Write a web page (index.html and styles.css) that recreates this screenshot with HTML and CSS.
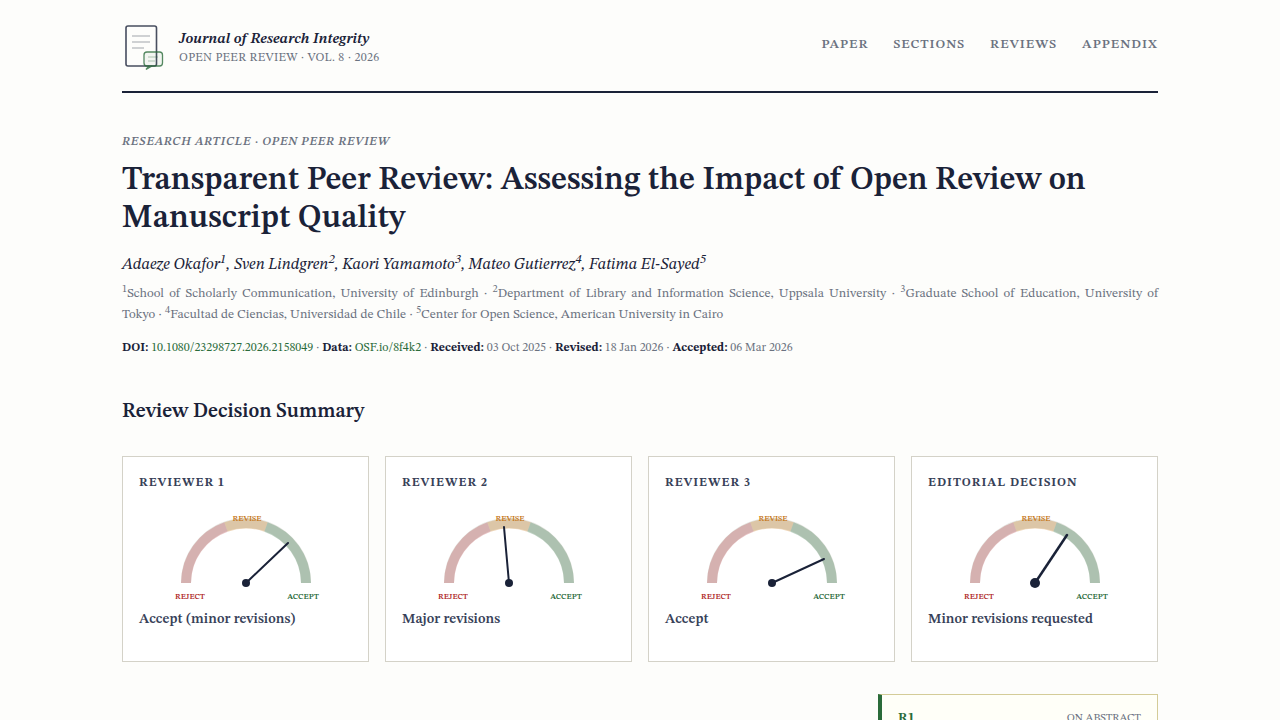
FILE: index.html
```html
<!DOCTYPE html>
<html lang="en">
<head>
<meta charset="utf-8">
<meta name="viewport" content="width=device-width, initial-scale=1">
<title>Journal of Research Integrity</title>
<link rel="stylesheet" href="styles.css">
</head>
<body>
<svg width="0" height="0" class="defs" aria-hidden="true">
  <defs>
    <g id="dial">
      <path class="track" d="M20 80A60 60 0 0 1 140 80"/>
      <path class="arc arc-reject" d="M20 80A60 60 0 0 1 60 24"/>
      <path class="arc arc-revise" d="M60 24A60 60 0 0 1 100 24"/>
      <path class="arc arc-accept" d="M100 24A60 60 0 0 1 140 80"/>
    </g>
  </defs>
</svg>
<div class="page">
  <header class="masthead">
    <div class="brand">
      <svg class="logo" width="45" height="50" viewBox="0 0 45 50" fill="none" aria-hidden="true">
        <rect x="4" y="4" width="30.500" height="40" rx="2" stroke="#1a2238" stroke-width="1.600" opacity=".8"/>
        <path d="M10 14h18M10 20h18M10 26h12" stroke="#1a2238" stroke-width="2" opacity=".2"/>
        <g stroke="#2a6b3a" stroke-width="1.300" opacity=".8"><rect x="22" y="30" width="18.500" height="14" rx="3" fill="#2a6b3a" fill-opacity=".06"/><path d="M27 44l-3 3.500 6-3.500"/></g>
        <path d="M26 35h10M26 39h7" stroke="#2a6b3a" opacity=".35"/>
      </svg>
      <div>
        <p class="brand-name">Journal of Research Integrity</p>
        <p class="brand-sub">Open Peer Review · Vol. 8 · 2026</p>
      </div>
    </div>
    <nav class="nav" aria-label="Main">
      <a href="#paper">Paper</a>
      <a href="#sections">Sections</a>
      <a href="#reviews">Reviews</a>
      <a href="#appendix">Appendix</a>
    </nav>
  </header>

  <main>
    <section class="article-head" id="paper">
      <p class="kicker">Research Article · Open Peer Review</p>
      <h1>Transparent Peer Review: Assessing the Impact of Open Review on Manuscript Quality</h1>
      <p class="authors">Adaeze Okafor<sup>1</sup>, Sven Lindgren<sup>2</sup>, Kaori Yamamoto<sup>3</sup>, Mateo Gutierrez<sup>4</sup>, Fatima El-Sayed<sup>5</sup></p>
      <p class="affiliations"><sup>1</sup>School of Scholarly Communication, University of Edinburgh · <sup>2</sup>Department of Library and Information Science, Uppsala University · <sup>3</sup>Graduate School of Education, University of <span class="keep">Tokyo · <sup>4</sup>Facultad</span> de Ciencias, Universidad de Chile · <sup>5</sup>Center for Open Science, American University in Cairo</p>
      <p class="meta"><strong>DOI:</strong> <a href="#doi">10.1080/23298727.2026.2158049</a> · <strong>Data:</strong> <a href="#data">OSF.io/8f4k2</a> · <strong>Received:</strong> 03 Oct 2025 · <strong>Revised:</strong> 18 Jan 2026 · <strong>Accepted:</strong> 06 Mar 2026</p>
    </section>

    <section id="reviews">
      <h2>Review Decision Summary</h2>
      <div class="decisions">
        <article class="card">
          <h3>Reviewer 1</h3>
          <svg class="gauge" viewBox="0 0 160 100" width="160" height="100">
            <use href="#dial"/>
            <text class="label reject" x="24" y="96">REJECT</text><text class="label revise" x="81" y="18">REVISE</text><text class="label accept" x="137" y="96">ACCEPT</text>
            <path class="needle" d="M80 80L122 40"/><circle class="hub" cx="80" cy="80" r="4"/>
          </svg>
          <p class="verdict">Accept (minor revisions)</p>
        </article>
        <article class="card">
          <h3>Reviewer 2</h3>
          <svg class="gauge" viewBox="0 0 160 100" width="160" height="100">
            <use href="#dial"/>
            <text class="label reject" x="24" y="96">REJECT</text><text class="label revise" x="81" y="18">REVISE</text><text class="label accept" x="137" y="96">ACCEPT</text>
            <path class="needle" d="M80 80L75 24"/><circle class="hub" cx="80" cy="80" r="4"/>
          </svg>
          <p class="verdict">Major revisions</p>
        </article>
        <article class="card">
          <h3>Reviewer 3</h3>
          <svg class="gauge" viewBox="0 0 160 100" width="160" height="100">
            <use href="#dial"/>
            <text class="label reject" x="24" y="96">REJECT</text><text class="label revise" x="81" y="18">REVISE</text><text class="label accept" x="137" y="96">ACCEPT</text>
            <path class="needle" d="M80 80L132 56"/><circle class="hub" cx="80" cy="80" r="4"/>
          </svg>
          <p class="verdict">Accept</p>
        </article>
        <article class="card">
          <h3>Editorial Decision</h3>
          <svg class="gauge" viewBox="0 0 160 100" width="160" height="100">
            <use href="#dial"/>
            <text class="label reject" x="24" y="96">REJECT</text><text class="label revise" x="81" y="18">REVISE</text><text class="label accept" x="137" y="96">ACCEPT</text>
            <path class="needle needle-final" d="M80 80L112 32"/><circle class="hub" cx="80" cy="80" r="5"/>
          </svg>
          <p class="verdict">Minor revisions requested</p>
        </article>
      </div>
    </section>

    <section class="body-grid" id="sections">
      <div></div>
      <aside class="comment">
        <span class="comment-id">R1</span>
        <span class="comment-on">On Abstract</span>
      </aside>
    </section>
  </main>
</div>
</body>
</html>
```
FILE: styles.css
```css
* { box-sizing: border-box; margin: 0; padding: 0; }

body {
  background: #fdfdfb;
  color: #1a2238;
  font-family: "STIX Two Text", "Liberation Serif", serif;
  font-size: 16px;
  overflow: hidden;
  height: 100vh;
}

a { color: inherit; text-decoration: none; }
sup { font-size: 80%; line-height: 0; }
.defs { position: absolute; }

.page { max-width: 1100px; margin: 0 auto; padding: 20px 32px 0; }

.masthead {
  display: flex;
  align-items: flex-start;
  justify-content: space-between;
  padding-bottom: 19px;
  border-bottom: 2px solid #1a2238;
}
.brand { display: flex; align-items: center; gap: 12px; }
.logo { display: block; margin-top: 2px; }
.brand-name { font-size: 15px; line-height: 20px; font-weight: 600; font-style: italic; padding-top: 4px; }
.brand-sub { font-size: 12px; line-height: 16px; letter-spacing: 0.3px; text-transform: uppercase; color: #6b7280; }
.nav { display: flex; gap: 25px; padding-top: 15px; }
.nav a { font-size: 13px; line-height: 20px; font-weight: 600; letter-spacing: 1px; text-transform: uppercase; color: #6b7280; }

.article-head { padding-top: 39px; }
.kicker { font-size: 12px; line-height: 20px; font-style: italic; font-weight: 600; letter-spacing: 0.06em; text-transform: uppercase; color: #6b7280; }
h1 { font-size: 32px; line-height: 38px; font-weight: 600; margin-top: 10px; }
.authors { font-size: 16px; line-height: 24px; font-style: italic; margin-top: 15px; }
.affiliations { font-size: 13px; line-height: 21px; text-align: justify; color: #6b7280; margin-top: 6px; }
.keep { white-space: nowrap; }
.meta { font-size: 12px; line-height: 20px; color: #6b7280; margin-top: 13px; }
.meta strong { color: #1a2238; }
.meta a { color: #2a6b3a; }

h2 { font-size: 20px; line-height: 26px; font-weight: 600; margin: 41px 0 31px; }

.decisions { display: grid; grid-template-columns: repeat(4, 1fr); gap: 16px; }
.card { background: #fff; border: 1px solid #d4d2c8; padding: 16px 16px 31px; }
.card h3 { font-size: 12px; line-height: 20px; font-weight: 700; letter-spacing: 1px; text-transform: uppercase; color: #374158; }
.gauge { display: block; margin: 10px auto 6px; }
.verdict { font-size: 14px; line-height: 21px; font-weight: 600; color: #374158; }

.track, .arc { fill: none; stroke-width: 10; }
.track { stroke: #e6e7e2; }
.arc { opacity: 0.3; }
.arc-reject { stroke: #b0343a; }
.arc-revise { stroke: #c67a1e; }
.arc-accept { stroke: #2a6b3a; }
.needle { stroke: #1a2238; stroke-width: 2; stroke-linecap: round; }
.needle-final { stroke-width: 2.5; }
.hub { fill: #1a2238; }
.label { font-size: 8px; font-weight: 600; text-anchor: middle; }
.reject { fill: #b02a2a; }
.revise { fill: #c67a1e; }
.accept { fill: #2a6b3a; }

.body-grid { display: grid; grid-template-columns: 1fr 280px; gap: 32px; margin-top: 32px; }
.comment {
  display: flex;
  justify-content: space-between;
  align-items: baseline;
  min-height: 160px;
  padding: 13px 16px;
  background: #fffff8;
  border: 1px solid #d4cc98;
  border-left: 4px solid #2a6b3a;
}
.comment-id { font-size: 13px; line-height: 20px; font-weight: 700; letter-spacing: 0.5px; color: #2a6b3a; }
.comment-on { font-size: 11px; line-height: 20px; text-transform: uppercase; color: #6b7280; }
```
